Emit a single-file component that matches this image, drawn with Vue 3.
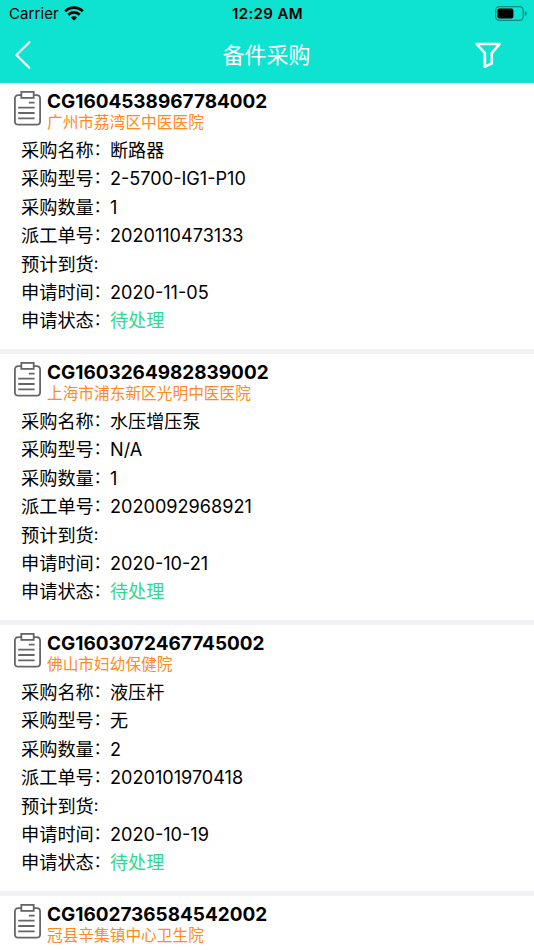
<script setup>
import { reactive } from "vue"

const fields = [
    { label: "采购名称", colon: "：", key: "name" },
    { label: "采购型号", colon: "：", key: "model" },
    { label: "采购数量", colon: "：", key: "count" },
    { label: "派工单号", colon: "：", key: "workNo" },
    { label: "预计到货", colon: ":", key: "arrival" },
    { label: "申请时间", colon: "：", key: "applyTime" },
    { label: "申请状态", colon: "：", key: "status" },
]

const orders = reactive([
    {
        code: "CG1604538967784002",
        hospital: "广州市荔湾区中医医院",
        name: "断路器",
        model: "2-5700-IG1-P10",
        count: "1",
        workNo: "2020110473133",
        arrival: "",
        applyTime: "2020-11-05",
        status: "待处理"
    },
    {
        code: "CG1603264982839002",
        hospital: "上海市浦东新区光明中医医院",
        name: "水压增压泵",
        model: "N/A",
        count: "1",
        workNo: "2020092968921",
        arrival: "",
        applyTime: "2020-10-21",
        status: "待处理"
    },
    {
        code: "CG1603072467745002",
        hospital: "佛山市妇幼保健院",
        name: "液压杆",
        model: "无",
        count: "2",
        workNo: "2020101970418",
        arrival: "",
        applyTime: "2020-10-19",
        status: "待处理"
    },
    {
        code: "CG1602736584542002",
        hospital: "冠县辛集镇中心卫生院",
    },
])
</script>

<template>
    <div class="purchase-page">
        <header class="top">
            <div class="status-bar">
                <div class="carrier">
                    <span>Carrier</span>
                    <svg class="wifi" viewBox="0 0 20 15">
                        <path d="M1.2 5.2 A12.6 12.6 0 0 1 18.8 5.2" />
                        <path d="M4.3 8.7 A8.2 8.2 0 0 1 15.7 8.7" />
                        <path class="dot" d="M6.8 11.5 A4.6 4.6 0 0 1 13.2 11.5 L10 14.6 Z" />
                    </svg>
                </div>
                <span class="clock">12:29 AM</span>
                <div class="battery-box">
                    <svg class="battery" viewBox="0 0 32 15">
                        <rect class="shell" x="0.6" y="0.6" width="27.6" height="13.8" rx="3.8" />
                        <rect x="2.4" y="2.5" width="16" height="10" rx="2" />
                        <path class="tip" d="M29.8 5 Q31.8 5.8 31.8 7.5 Q31.8 9.2 29.8 10 Z" />
                    </svg>
                </div>
            </div>
            <div class="nav-bar">
                <svg class="back" viewBox="0 0 16 28">
                    <path d="M14.3 1.2 L1.4 14 L14.3 26.8" />
                </svg>
                <h1 class="page-title">备件采购</h1>
                <svg class="filter" viewBox="0 0 28 27">
                    <path d="M2.6 2 H25.6 L17.8 11.2 V21.4 L10.9 24.9 V11.2 Z" />
                </svg>
            </div>
        </header>

        <main class="list">
            <section class="card" v-for="item in orders" :key="item.code">
                <div class="card-head">
                    <svg class="clipboard" viewBox="0 0 27 35">
                        <path d="M7 4.2 H4.4 Q0.9 4.2 0.9 7.7 V30.2 Q0.9 33.7 4.4 33.7 H22.6 Q26.1 33.7 26.1 30.2 V7.7 Q26.1 4.2 22.6 4.2 H20" />
                        <rect x="7.3" y="0.9" width="12.4" height="6" />
                        <path d="M14.8 11.6 H20.6 M4.2 16.7 H20.6 M4.2 22 H20.6 M4.2 27.3 H20.6" />
                    </svg>
                    <div class="head-text">
                        <p class="code">{{ item.code }}</p>
                        <p class="hospital">{{ item.hospital }}</p>
                    </div>
                </div>
                <div class="rows" v-if="item.name">
                    <div class="row" v-for="field in fields" :key="field.key">
                        <div class="label">
                            <span>{{ field.label }}</span>
                            <span class="colon">{{ field.colon }}</span>
                        </div>
                        <span class="value" :class="{ pending: field.key === 'status' }">{{ item[field.key] }}</span>
                    </div>
                </div>
            </section>
        </main>
    </div>
</template>

<style>
body{
    margin:0;
    overflow: hidden;
}
</style>

<style scoped>
.purchase-page{
    height:950px;
    overflow: hidden;
    background: #FFFFFF;
    color:#000000;
    font-family: Inter, "Noto Sans CJK SC", sans-serif;
}
.top{
    height:83px;
    background: #0EE2D0;
}
.status-bar{
    height:27px;
    display: grid;
    grid-template-columns: 1fr auto 1fr;
    align-items: center;
    padding:0 7px 0 9px;
    font-size:15px;
    line-height: 27px;
}
.carrier{
    display: flex;
    align-items: center;
    gap:5px;
    letter-spacing: 0.1px;
}
.wifi{
    width:20px;
    height:15px;
    fill:none;
    stroke:#000000;
    stroke-width: 2.8;
}
.wifi .dot{
    fill:#000000;
    stroke:none;
}
.clock{
    font-weight: 600;
    letter-spacing: 0.4px;
    padding-right:1px;
}
.battery-box{
    display: flex;
    justify-content: flex-end;
}
.battery{
    width:32px;
    height:15px;
}
.battery .shell{
    fill:none;
    stroke:#078E83;
    stroke-width: 1.2;
}
.battery .tip{
    fill:#078E83;
}
.nav-bar{
    height:56px;
    display: grid;
    grid-template-columns: 1fr auto 1fr;
    align-items: center;
    padding:0 32px 0 15px;
}
.back{
    width:16px;
    height:28px;
    fill:none;
    stroke:#FFFFFF;
    stroke-width: 2.2;
    stroke-linecap: round;
    stroke-linejoin: round;
}
.page-title{
    margin:0 0 0 16px;
    font-size:22px;
    line-height: 55px;
    font-weight: 400;
    color:#FFFFFF;
}
.filter{
    width:28px;
    height:27px;
    justify-self: end;
    fill:none;
    stroke:#FFFFFF;
    stroke-width: 2.6;
    stroke-linejoin: round;
}
.card{
    height:266px;
    border-bottom:5px solid #F0F0F5;
}
.card-head{
    display: flex;
    gap:6px;
    padding:8px 0 0 14px;
}
.clipboard{
    width:27px;
    height:35px;
    fill:none;
    stroke:#666666;
    stroke-width: 1.8;
}
.code{
    margin:0;
    padding-top:1px;
    font-size:18.95px;
    line-height: 20px;
    font-weight: 700;
    white-space: nowrap;
}
.hospital{
    margin:0;
    font-size:15.7px;
    line-height: 22px;
    color:#FF8A22;
    white-space: nowrap;
}
.rows{
    padding:2px 0 0 21px;
}
.row{
    display: flex;
    height:28.4px;
    line-height: 28.4px;
    font-size:18.2px;
    white-space: nowrap;
}
.label{
    display: flex;
    width:89px;
}
.colon{
    font-size:16px;
    line-height: 27px;
}
.value{
    font-size:18.1px;
    line-height: 29.4px;
}
.pending{
    color:#34D88C;
}
</style>
